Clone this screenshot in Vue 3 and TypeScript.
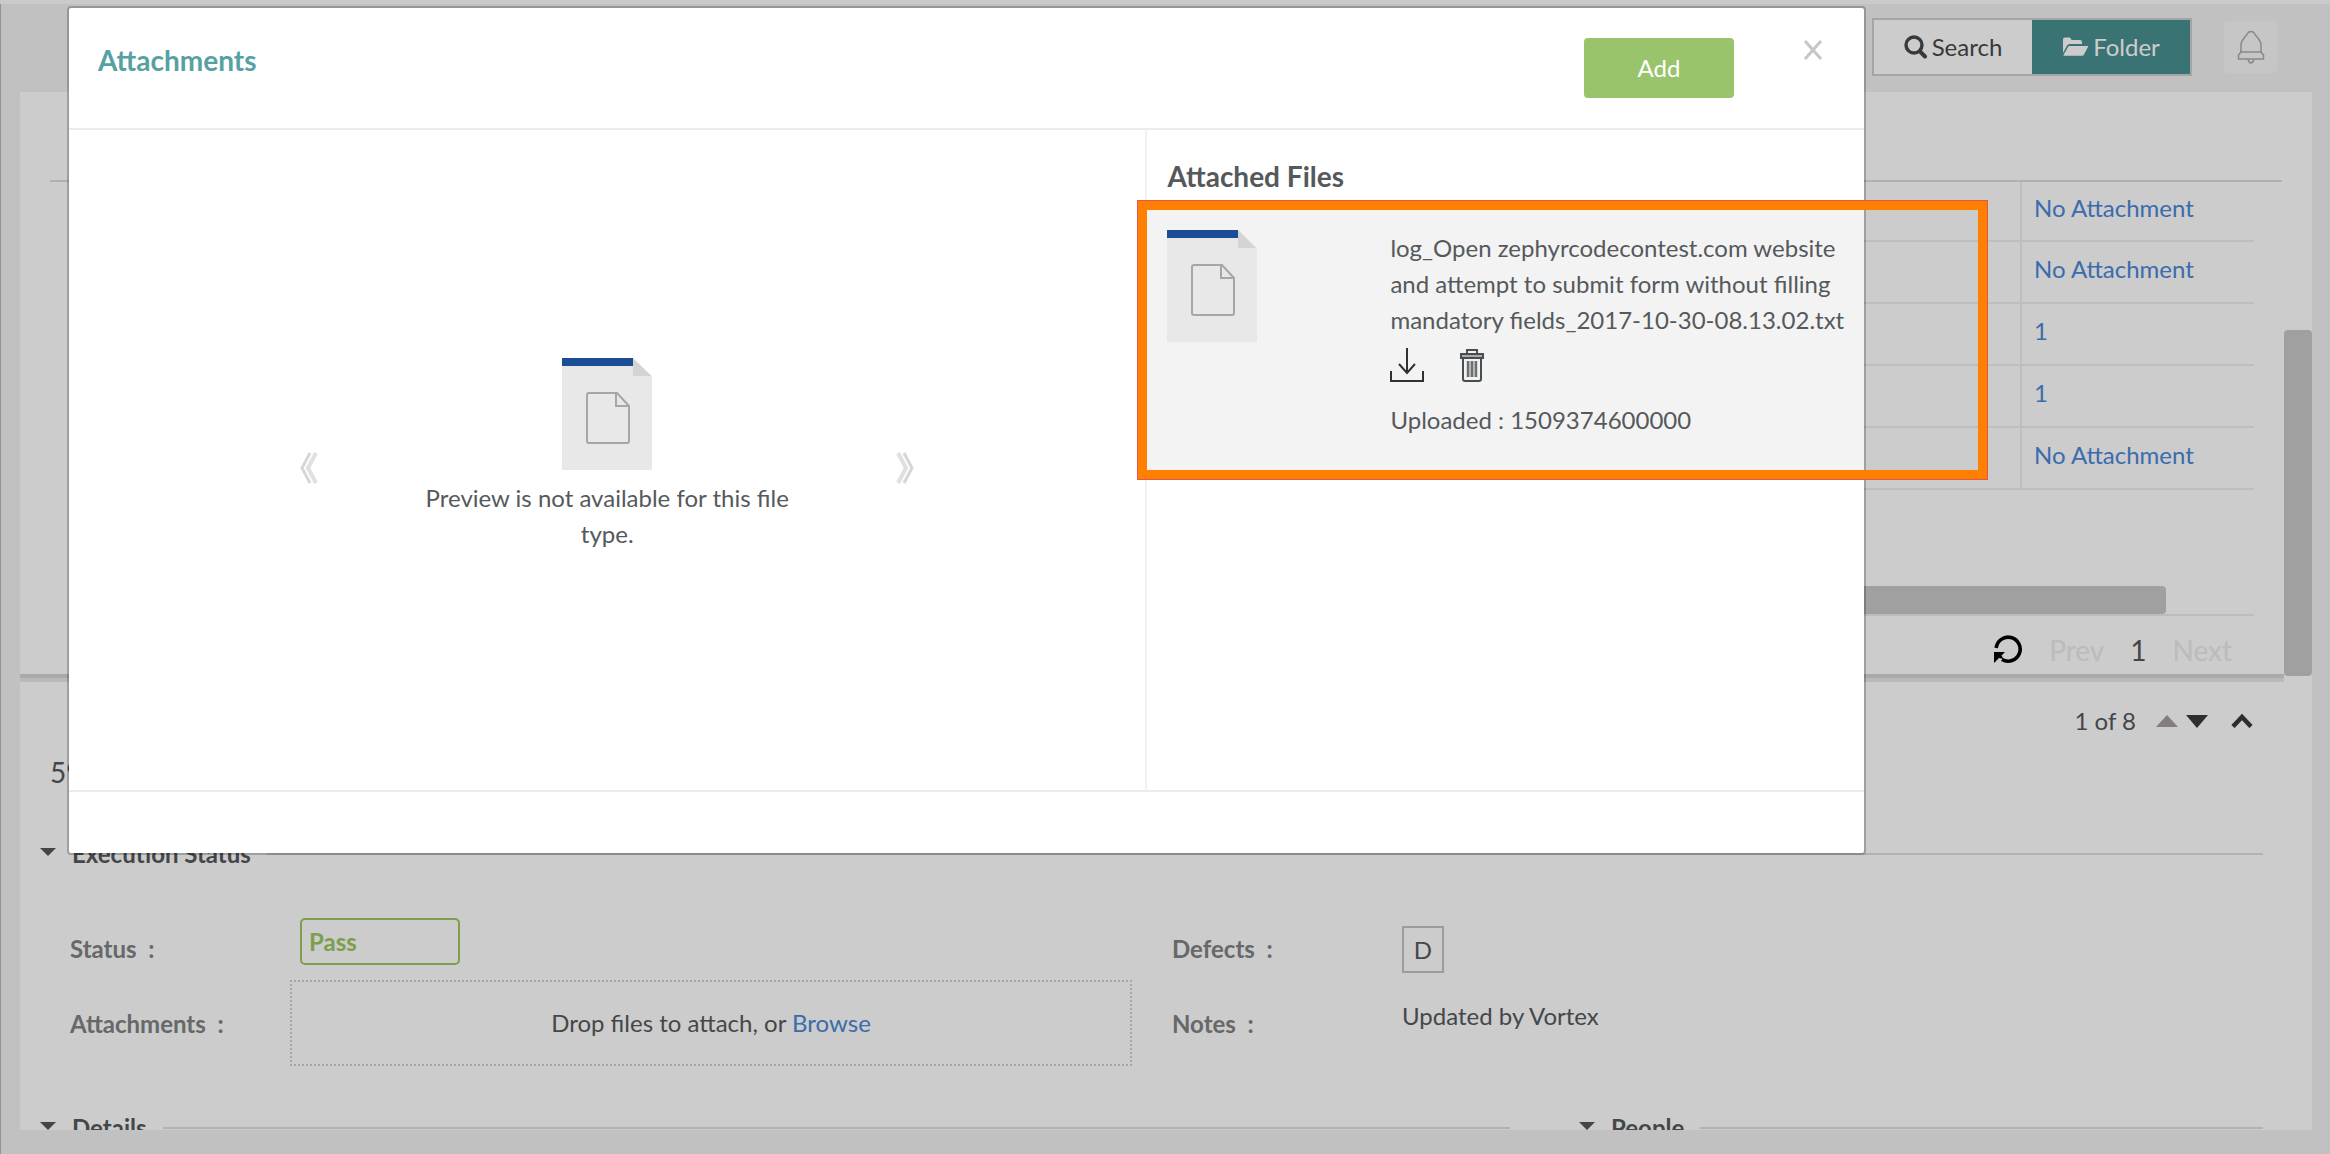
<script setup lang="ts">
import { ref } from 'vue'

interface ExecutionRow {
  id: number
  attachment: string
}

const rows: ExecutionRow[] = [
  { id: 1, attachment: 'No Attachment' },
  { id: 2, attachment: 'No Attachment' },
  { id: 3, attachment: '1' },
  { id: 4, attachment: '1' },
  { id: 5, attachment: 'No Attachment' },
]

const status = ref('Pass')
const fileName =
  'log_Open zephyrcodecontest.com website and attempt to submit form without filling mandatory fields_2017-10-30-08.13.02.txt'
const uploaded = '1509374600000'
</script>

<template>
  <div class="app">
    <div class="strip"></div>
    <header class="topbar">
      <div class="switch">
        <button type="button" class="switch-btn">
          <svg width="24" height="24" viewBox="0 0 24 24" fill="none" stroke="currentColor">
            <circle cx="10" cy="10" r="8" stroke-width="3.4" />
            <path d="M16 16.500l5 5" stroke-width="4" stroke-linecap="round" />
          </svg>
          Search
        </button>
        <button type="button" class="switch-btn active">
          <svg width="27" height="22" viewBox="0 0 27 22" fill="currentColor">
            <path d="M1 17V3.500Q1 1.500 3 1.500H7.500Q9 1.500 9.500 4H18Q20 4 20 6V8H8Q6 8 5 9.500Z" />
            <path d="M7.500 10H25.500Q26.500 10 26 11L22 18.500Q21.300 19.700 20 19.700H2Q1 19.700 1.600 18.700L6 11Q6.600 10 7.500 10Z" />
          </svg>
          Folder
        </button>
      </div>
      <button type="button" class="bell" aria-label="Notifications">
        <svg width="28" height="34" viewBox="0 0 28 34" fill="none" stroke="currentColor" stroke-width="1.500">
          <path d="M4 22V15C4 10 8 8 10.500 3.500Q11.500 1.500 14 1.500T17.500 3.500C20 8 24 10 24 15V22" />
          <path d="M4 22H24L26.500 25V29H1.500V25Z" />
          <path d="M11 29Q12 33 14 33T17 29" />
        </svg>
      </button>
    </header>

    <main class="panel">
      <section class="results">
        <div class="results-body">
          <div class="head-rule"></div>
          <table class="grid">
            <tbody>
              <tr v-for="row in rows" :key="row.id">
                <td></td>
                <td class="att"><a href="#">{{ row.attachment }}</a></td>
              </tr>
            </tbody>
          </table>
          <div class="hscroll"><div class="hthumb"></div></div>
          <nav class="pager">
            <button type="button" class="refresh" aria-label="Refresh">
              <svg width="30" height="30" viewBox="0 0 30 30">
                <path d="M3.200 13A12 12 0 1 1 9 24.500" fill="none" stroke="#000" stroke-width="3.600" />
                <path d="M1 17H12L8.500 20.500L10.500 24L6 23L1 28Z" fill="#000" />
              </svg>
            </button>
            <button type="button" class="page off">Prev</button>
            <span class="page current">1</span>
            <button type="button" class="page off">Next</button>
          </nav>
        </div>
        <div class="vscroll"><div class="vthumb"></div></div>
      </section>

      <section class="detail">
        <div class="splitter"></div>
        <div class="stepper">
          <span>1 of 8</span>
          <svg class="up" width="22" height="12" viewBox="0 0 22 12"><path d="M0 12L11 0L22 12Z" fill="#a79d9d" /></svg>
          <svg width="22" height="13" viewBox="0 0 22 13"><path d="M0 0H22L11 13Z" fill="#373b3d" /></svg>
          <svg class="chev" width="22" height="14" viewBox="0 0 22 14"><path d="M2 12.500L11 3L20 12.500" fill="none" stroke="#373b3d" stroke-width="4.500" /></svg>
        </div>
        <h2 class="item-title">59</h2>

        <h3 class="section-head"><span class="caret"></span>Execution Status<span class="rule"></span></h3>

        <div class="fields">
          <label class="label" for="status">Status&nbsp; :</label>
          <div class="value"><input id="status" v-model="status" class="status" type="text" /></div>
          <span class="label">Defects&nbsp; :</span>
          <div class="value"><button type="button" class="defect">D</button></div>
        </div>
        <div class="fields second">
          <span class="label">Attachments&nbsp; :</span>
          <div class="drop">Drop files to attach, or&nbsp;<a href="#">Browse</a></div>
          <span class="label">Notes&nbsp; :</span>
          <div class="value notes">Updated by Vortex</div>
        </div>

        <div class="lower">
          <h3 class="section-head wide"><span class="caret"></span>Details<span class="rule"></span></h3>
          <h3 class="section-head"><span class="caret"></span>People<span class="rule"></span></h3>
        </div>
      </section>
    </main>

    <div class="overlay">
      <div class="modal" role="dialog" aria-labelledby="modal-title">
        <div class="modal-head">
          <h1 id="modal-title">Attachments</h1>
          <button type="button" class="add">Add</button>
          <button type="button" class="close" aria-label="Close">
            <svg width="20" height="20" viewBox="0 0 20 20"><path d="M2 1L18 19M18 1L2 19" stroke="#c6c6c6" stroke-width="3" /></svg>
          </button>
        </div>
        <div class="modal-body">
          <div class="preview">
            <button type="button" class="nav" aria-label="Previous file">
              <svg width="20" height="32" viewBox="0 0 20 32" fill="none">
                <path d="M11 1L3 16L11 31" stroke="#d6d6d6" stroke-width="3" />
                <path d="M17 1L9 16L17 31" stroke="#e0e0e0" stroke-width="4" />
              </svg>
            </button>
            <div class="preview-center">
              <svg class="file-icon" width="90" height="112" viewBox="0 0 90 112">
                <path d="M0 0H71L90 18V112H0Z" fill="#e8e8e8" />
                <path d="M0 0H71V8H0Z" fill="#1b4c94" />
                <path d="M71 0L89 18H71Z" fill="#d2d5d4" />
                <path d="M27 35H55L67 48V83Q67 85 65 85H27Q25 85 25 83V37Q25 35 27 35ZM54 35V48H67" fill="none" stroke="#a3a8a7" stroke-width="2" />
              </svg>
              <p>Preview is not available for this file type.</p>
            </div>
            <button type="button" class="nav" aria-label="Next file">
              <svg width="20" height="32" viewBox="0 0 20 32" fill="none">
                <path d="M9 1L17 16L9 31" stroke="#d6d6d6" stroke-width="3" />
                <path d="M3 1L11 16L3 31" stroke="#e0e0e0" stroke-width="4" />
              </svg>
            </button>
          </div>
          <div class="files">
            <h2>Attached Files</h2>
            <div class="file">
              <svg class="file-icon" width="90" height="112" viewBox="0 0 90 112">
                <path d="M0 0H71L90 18V112H0Z" fill="#e8e8e8" />
                <path d="M0 0H71V8H0Z" fill="#1b4c94" />
                <path d="M71 0L89 18H71Z" fill="#d2d5d4" />
                <path d="M27 35H55L67 48V83Q67 85 65 85H27Q25 85 25 83V37Q25 35 27 35ZM54 35V48H67" fill="none" stroke="#a3a8a7" stroke-width="2" />
              </svg>
              <div class="file-info">
                <p>{{ fileName }}</p>
                <div class="actions">
                  <button type="button" aria-label="Download">
                    <svg width="34" height="36" viewBox="0 0 34 36" fill="none" stroke="#2f3234" stroke-width="2">
                      <path d="M17 1V26M9 17L17 26L25 17" />
                      <path d="M1 24V34H33V24" />
                    </svg>
                  </button>
                  <button type="button" aria-label="Delete">
                    <svg width="24" height="34" viewBox="0 0 24 34" fill="none" stroke="#4a4d4f" stroke-width="2">
                      <path d="M7 5V2H17V5" />
                      <path d="M1 6H23V10H1Z" fill="#a9abac" />
                      <path d="M3 10V31Q3 33 5 33H19Q21 33 21 31V10" />
                      <path d="M6.500 13H17.500V29H6.500Z" fill="#b4b6b7" stroke="none" />
                      <path d="M8 13V29M12 13V29M16 13V29" stroke="#6c7072" />
                    </svg>
                  </button>
                </div>
                <p>Uploaded : {{ uploaded }}</p>
              </div>
              <div class="callout"></div>
            </div>
          </div>
        </div>
        <div class="modal-foot"></div>
      </div>
    </div>
  </div>
</template>

<style>
body {
  margin: 0;
  overflow: hidden;
}
</style>

<style scoped>
* {
  box-sizing: border-box;
}
.app {
  position: relative;
  display: flex;
  flex-direction: column;
  height: 100vh;
  padding-bottom: 24px;
  background: #f2f2f2;
  box-shadow: inset 1px 0 #b8b8b8;
  font: 24px/36px Lato, "Open Sans", sans-serif;
  color: #55595c;
  overflow: hidden;
}
button,
input {
  font: inherit;
  color: inherit;
  background: none;
  border: 0;
  padding: 0;
  margin: 0;
}
a {
  color: #4a87d8;
  text-decoration: none;
}
h1,
h2,
h3,
p {
  margin: 0;
}
svg {
  display: block;
  flex: none;
}

.strip {
  flex: none;
  height: 4px;
  background: #fdfdfd;
}
.topbar {
  display: flex;
  justify-content: flex-end;
  align-items: center;
  gap: 32px;
  height: 88px;
  padding: 0 53px 2px 0;
  flex: none;
}
.switch {
  display: flex;
  width: 320px;
  height: 58px;
  border: 2px solid #cfcfcf;
}
.switch-btn {
  flex: 1;
  display: flex;
  align-items: center;
  justify-content: center;
  gap: 4px;
  background: #fff;
  color: #45484a;
}
.switch-btn.active {
  background: #499092;
  color: #fff;
}
.bell {
  display: flex;
  align-items: center;
  justify-content: center;
  width: 53px;
  height: 52px;
  border-radius: 4px;
  background: #f8f8f8;
  color: #aaa;
}

.panel {
  flex: 1;
  min-height: 0;
  margin: 0 18px 0 20px;
  background: #fff;
  overflow: hidden;
}
.results {
  display: flex;
  height: 582px;
}
.results-body {
  flex: 1;
  padding: 88px 2px 0 30px;
}
.head-rule {
  height: 2px;
  background: #dedede;
}
.grid {
  width: calc(100% - 68px);
  margin-left: 40px;
  border-collapse: separate;
  border-spacing: 0;
}
.grid td {
  height: 62px;
  padding: 0 0 6px 12px;
  border-bottom: 2px solid #eee;
}
.grid tr:first-child td {
  height: 60px;
}
.grid .att {
  width: 234px;
  border-left: 2px solid #eee;
}
.hscroll {
  margin: 96px 28px 0 40px;
  border-bottom: 2px solid #ececec;
}
.hthumb {
  height: 28px;
  margin-right: 88px;
  border-radius: 4px;
  background: #c9c9c9;
}
.pager {
  display: flex;
  align-items: center;
  justify-content: flex-end;
  gap: 26px;
  height: 58px;
  padding: 10px 50px 0 0;
  font-size: 28px;
}
.page.off {
  color: #ebebeb;
}
.vscroll {
  width: 28px;
  padding-top: 238px;
}
.vthumb {
  height: 346px;
  border-radius: 4px;
  background: #c9c9c9;
}

.splitter {
  height: 8px;
  margin-right: 28px;
  background: #e8e8e8;
  border-top: 4px solid #d5d5d5;
}
.stepper {
  display: flex;
  align-items: center;
  justify-content: flex-end;
  gap: 8px;
  height: 78px;
  padding-right: 59px;
}
.stepper .up {
  margin-left: 12px;
}
.stepper .chev {
  margin-left: 15px;
}
.item-title {
  height: 82px;
  padding-left: 30px;
  font-size: 28px;
  font-weight: 400;
  line-height: 24px;
}
.section-head {
  display: flex;
  align-items: center;
  flex: 1;
  height: 24px;
  padding: 0 49px 0 20px;
  font-size: 24px;
  line-height: 24px;
  font-weight: 700;
}
.caret {
  width: 0;
  margin: 0 16px 4px 0;
  border: 8px solid transparent;
  border-top-color: #55595c;
  border-bottom: 0;
}
.rule {
  flex: 1;
  height: 2px;
  margin-left: 16px;
  background: #dedfdf;
}
.fields {
  display: grid;
  grid-template-columns: 230px 872px 230px 1fr;
  padding: 52px 0 0 50px;
}
.label {
  padding-top: 13px;
  font-weight: 700;
  color: #808384;
}
.status {
  width: 160px;
  height: 47px;
  padding-left: 7px;
  border: 2px solid #9dc75e;
  border-radius: 5px;
  color: #9dc75e;
  font-weight: 700;
}
.defect {
  width: 42px;
  height: 47px;
  margin-top: 8px;
  border: 2px solid #c4c4c4;
}
.fields.second {
  padding-top: 7px;
}
.second .label {
  padding-top: 26px;
}
.drop {
  display: flex;
  align-items: center;
  justify-content: center;
  width: 842px;
  height: 86px;
  margin-left: -10px;
  border: 2px dotted #d0d0d0;
}
.notes {
  padding-top: 18px;
}
.lower {
  display: flex;
  margin-top: 50px;
}
.section-head.wide {
  flex: none;
  width: 1539px;
}

.overlay {
  position: absolute;
  inset: 0;
  padding: 6px 464px 0 67px;
  background: rgba(0, 0, 0, 0.2);
}
.modal {
  background: #fff;
  background-clip: padding-box;
  border: 2px solid rgba(0, 0, 0, 0.22);
  border-radius: 4px;
}
.modal-head {
  display: flex;
  align-items: flex-start;
  height: 122px;
  padding: 30px 41px 0 29px;
  border-bottom: 2px solid #ebebeb;
}
.modal-head h1 {
  flex: 1;
  padding-top: 4px;
  font-size: 28px;
  line-height: 36px;
  color: #57a0a3;
}
.add {
  width: 150px;
  height: 60px;
  border-radius: 4px;
  background: #9ac46c;
  color: #fff;
}
.close {
  margin: 2px 0 0 69px;
}
.modal-body {
  display: flex;
  height: 660px;
}
.preview {
  flex: 1077;
  display: flex;
  justify-content: center;
  align-items: flex-start;
}
.nav {
  margin-top: 322px;
}
.preview-center {
  width: 576px;
  padding: 228px 100px 0;
  text-align: center;
}
.preview-center .file-icon {
  margin: 0 auto 10px;
}
.files {
  flex: 717;
  border-left: 2px solid #f2f2f2;
}
.files h2 {
  padding: 28px 0 6px 20px;
  font-size: 28px;
  line-height: 36px;
}
.file {
  position: relative;
  display: flex;
  align-items: flex-start;
  height: 280px;
  padding: 30px 0 0 20px;
  background: #f3f3f3;
}
.file-info {
  width: 460px;
  margin-left: 133px;
}
.actions {
  display: flex;
  align-items: center;
  gap: 36px;
  height: 64px;
  padding-bottom: 10px;
}
.callout {
  position: absolute;
  inset: 0 -124px 0 -10px;
  border: 10px solid #ff8000;
  outline: 1px solid #e0584e;
  outline-offset: -1px;
}
.modal-foot {
  height: 63px;
  border-top: 2px solid #ebebeb;
}
</style>
